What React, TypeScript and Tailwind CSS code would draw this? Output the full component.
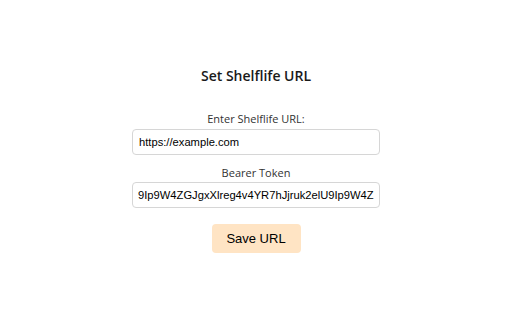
export default function App() {
  return (
    <div className="w-[512px] h-[320px] bg-white flex flex-col items-center pt-[66px] font-['Segoe_UI','Open_Sans',sans-serif] text-[#222]">
      <h1 className="text-[14px] font-semibold leading-[20px] text-[#1a1a1a]">Set Shelflife URL</h1>

      <div className="mt-[25px] flex flex-col items-center w-[248px]">
        <label className="text-[11px] leading-[16px] text-[#333]">Enter Shelflife URL:</label>
        <input
          type="text"
          defaultValue="https://example.com"
          className="mt-[2px] w-[248px] h-[26px] px-[6px] border border-[#d6d6d6] rounded-[4px] text-[11.2px] text-black font-['Liberation_Sans',Arial,sans-serif] outline-none"
        />

        <label className="mt-[10px] text-[11px] leading-[16px] text-[#333]">Bearer Token</label>
        <input
          type="text"
          defaultValue="9Ip9W4ZGJgxXlreg4v4YR7hJjruk2elU9Ip9W4Z"
          className="mt-[1px] w-[248px] h-[26px] px-[5px] border border-[#d6d6d6] rounded-[4px] text-[11.2px] text-black font-['Liberation_Sans',Arial,sans-serif] outline-none"
        />

        <button className="mt-[16px] w-[89px] h-[29px] rounded-[4px] bg-[#ffe4c4] text-[13px] text-black font-['Liberation_Sans',Arial,sans-serif]">
          Save URL
        </button>
      </div>
    </div>
  );
}
